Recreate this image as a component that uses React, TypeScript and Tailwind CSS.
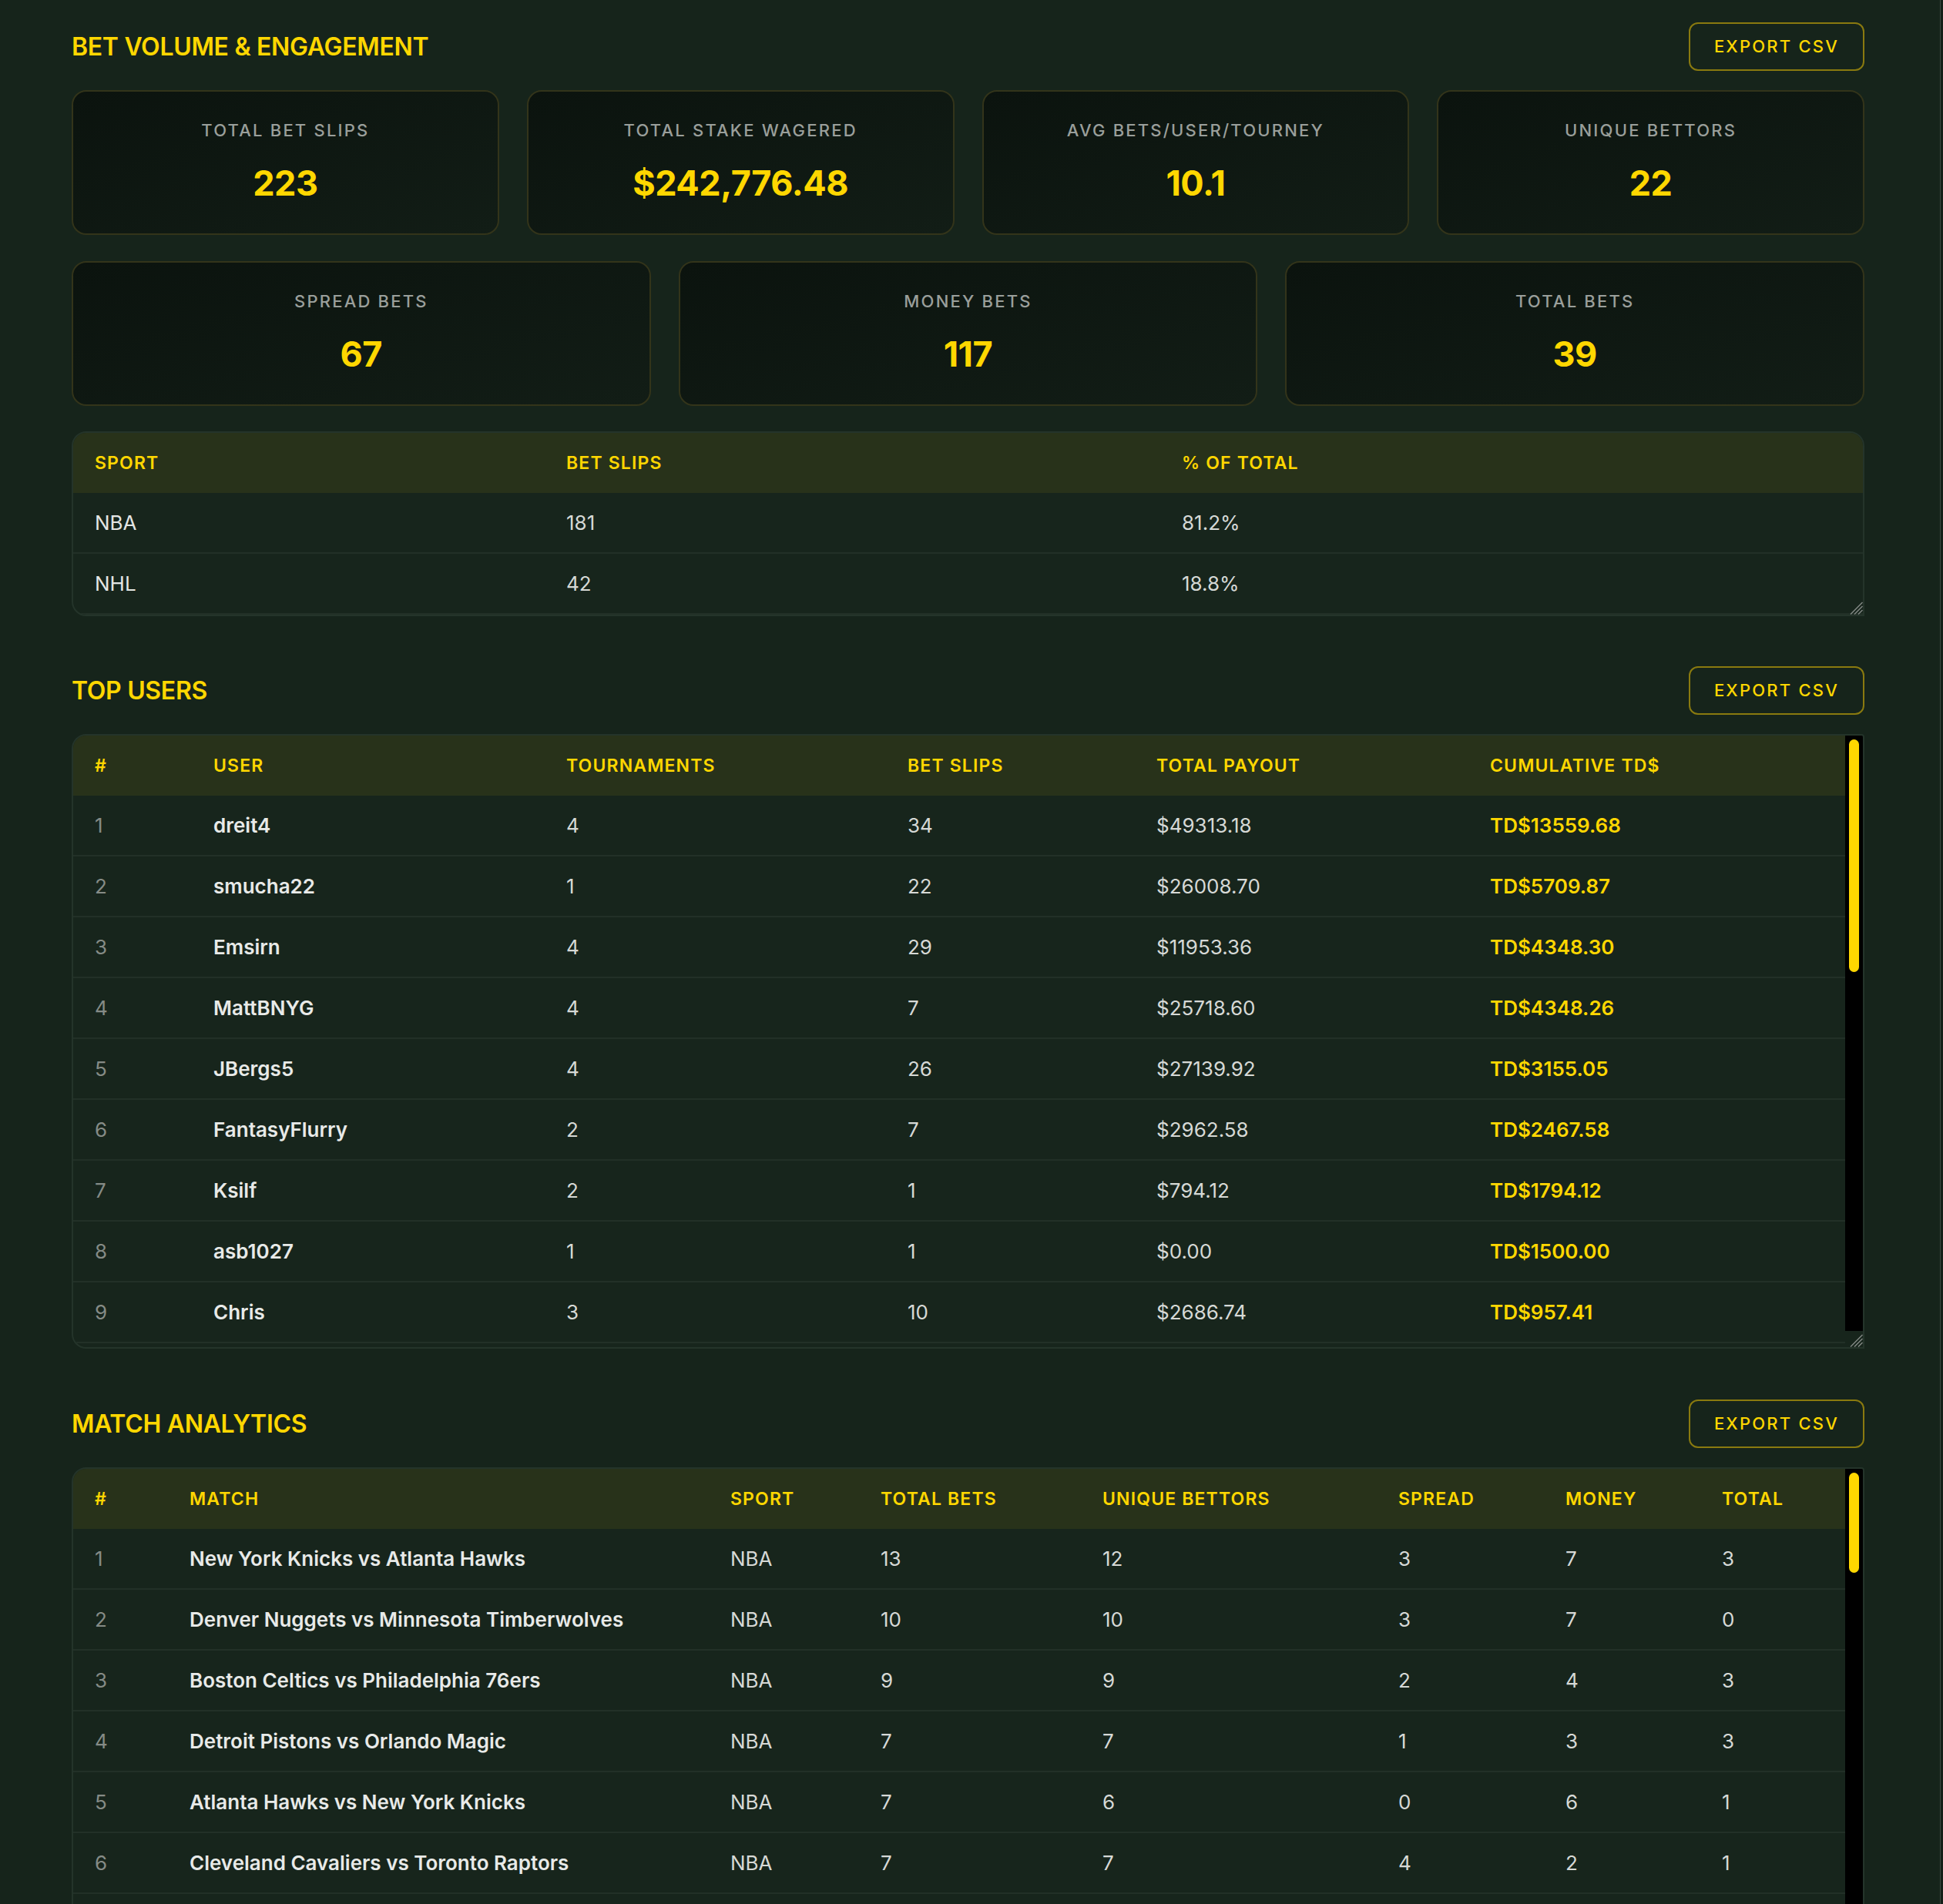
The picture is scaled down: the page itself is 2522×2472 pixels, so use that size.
import React from "react";

type UserRow = [string, number, number, string, string];
type MatchRow = [string, string, number, number, number, number, number];

const topCards = [
    { label: "TOTAL BET SLIPS", value: "223" },
    { label: "TOTAL STAKE WAGERED", value: "$242,776.48" },
    { label: "AVG BETS/USER/TOURNEY", value: "10.1" },
    { label: "UNIQUE BETTORS", value: "22" },
];

const typeCards = [
    { label: "SPREAD BETS", value: "67" },
    { label: "MONEY BETS", value: "117" },
    { label: "TOTAL BETS", value: "39" },
];

const sports = [
    ["NBA", "181", "81.2%"],
    ["NHL", "42", "18.8%"],
];

// rows that fit in the visible part of the scroll box
const users: UserRow[] = [
    ["dreit4", 4, 34, "$49313.18", "TD$13559.68"],
    ["smucha22", 1, 22, "$26008.70", "TD$5709.87"],
    ["Emsirn", 4, 29, "$11953.36", "TD$4348.30"],
    ["MattBNYG", 4, 7, "$25718.60", "TD$4348.26"],
    ["JBergs5", 4, 26, "$27139.92", "TD$3155.05"],
    ["FantasyFlurry", 2, 7, "$2962.58", "TD$2467.58"],
    ["Ksilf", 2, 1, "$794.12", "TD$1794.12"],
    ["asb1027", 1, 1, "$0.00", "TD$1500.00"],
    ["Chris", 3, 10, "$2686.74", "TD$957.41"],
];

const matches: MatchRow[] = [
    ["New York Knicks vs Atlanta Hawks", "NBA", 13, 12, 3, 7, 3],
    ["Denver Nuggets vs Minnesota Timberwolves", "NBA", 10, 10, 3, 7, 0],
    ["Boston Celtics vs Philadelphia 76ers", "NBA", 9, 9, 2, 4, 3],
    ["Detroit Pistons vs Orlando Magic", "NBA", 7, 7, 1, 3, 3],
    ["Atlanta Hawks vs New York Knicks", "NBA", 7, 6, 0, 6, 1],
    ["Cleveland Cavaliers vs Toronto Raptors", "NBA", 7, 7, 4, 2, 1],
];

const thCls =
    "bg-[#28321a] px-[28px] py-[21px] text-left text-[23px] font-semibold leading-[36px] tracking-[0.05em] text-[#ffd700]";
const tdCls = "px-[28px] py-[20px] text-[26px] leading-[37px]";

function Grip() {
    return (
        <svg width="20" height="20" viewBox="0 0 20 20" className="absolute bottom-0 right-0">
            <path d="M4 19.5 L19.5 4 M9 19.5 L19.5 9 M14 19.5 L19.5 14" stroke="#858a86" strokeWidth="1.4" />
        </svg>
    );
}

// black track + yellow thumb like the app's custom scrollbar
function ScrollTrack({ thumb }: { thumb: number }) {
    return (
        <div className="flex w-[23px] shrink-0 flex-col">
            <div className="flex-1 bg-black px-[5px] pt-[5px]">
                <div className="rounded-full bg-[#ffd700]" style={{ height: thumb }} />
            </div>
            <div className="relative h-[21px]">
                <Grip />
            </div>
        </div>
    );
}

function SectionHeader({ title }: { title: string }) {
    return (
        <div className="mb-[25px] flex items-center justify-between">
            <h2 className="text-[32px] font-semibold leading-[40px] tracking-[-0.01em] text-[#ffd700]">{title}</h2>
            <button className="rounded-[12px] border-2 border-[#8a7a0f] px-[31px] py-[13px] text-[22px] font-medium leading-[33px] tracking-[0.1em] text-[#ffd700]">
                EXPORT CSV
            </button>
        </div>
    );
}

function StatCard({ label, value }: { label: string; value: string }) {
    return (
        <div className="rounded-[19px] border-2 border-[#33341a] bg-linear-to-br from-[#0b130e] to-[#121d16] pt-[34px] pb-[32px] text-center">
            <div className="text-[22px] font-medium leading-[33px] tracking-[0.1em] text-[#9a9f9b]">{label}</div>
            <div className="mt-[18px] text-[45px] font-bold leading-[67px] tracking-[-0.01em] text-[#ffd700]">{value}</div>
        </div>
    );
}

export default function App() {
    return (
        <div className="flex h-screen overflow-hidden bg-[#16241b] text-[#e4e6e4] [font-family:Inter,sans-serif]">
            <main className="min-w-0 flex-1 pl-[93px] pr-[98px] pt-[29px]">
                {/* bet volume */}
                <section>
                    <SectionHeader title="BET VOLUME & ENGAGEMENT" />
                    <div className="grid grid-cols-4 gap-[36px]">
                        {topCards.map((c) => (
                            <StatCard key={c.label} {...c} />
                        ))}
                    </div>
                    <div className="mt-[34px] grid grid-cols-3 gap-[36px]">
                        {typeCards.map((c) => (
                            <StatCard key={c.label} {...c} />
                        ))}
                    </div>

                    <div className="relative mt-[33px] overflow-hidden rounded-[19px] rounded-br-none border-2 border-[#24342a] bg-[#17251c]">
                        <table className="w-full table-fixed border-collapse">
                            <thead>
                                <tr>
                                    <th className={`${thCls} w-[612px]`}>SPORT</th>
                                    <th className={`${thCls} w-[799px]`}>BET SLIPS</th>
                                    <th className={thCls}>% OF TOTAL</th>
                                </tr>
                            </thead>
                            <tbody>
                                {sports.map((s) => (
                                    <tr key={s[0]} className="border-b-2 border-[#223027]">
                                        <td className={`${tdCls} text-[#e4e6e4]`}>{s[0]}</td>
                                        <td className={`${tdCls} text-[#d6d9d6]`}>{s[1]}</td>
                                        <td className={`${tdCls} text-[#d6d9d6]`}>{s[2]}</td>
                                    </tr>
                                ))}
                            </tbody>
                        </table>
                        <Grip />
                    </div>
                </section>

                {/* top users */}
                <section className="mt-[65px]">
                    <SectionHeader title="TOP USERS" />
                    <div className="flex h-[798px] overflow-hidden rounded-[19px] rounded-tr-[4px] rounded-br-none border-2 border-[#24342a] bg-[#17251c]">
                        <div className="min-w-0 flex-1 overflow-hidden">
                            <table className="w-full table-fixed border-collapse">
                                <thead>
                                    <tr>
                                        <th className={`${thCls} w-[154px]`}>#</th>
                                        <th className={`${thCls} w-[458px]`}>USER</th>
                                        <th className={`${thCls} w-[443px]`}>TOURNAMENTS</th>
                                        <th className={`${thCls} w-[323px]`}>BET SLIPS</th>
                                        <th className={`${thCls} w-[433px]`}>TOTAL PAYOUT</th>
                                        <th className={thCls}>CUMULATIVE TD$</th>
                                    </tr>
                                </thead>
                                <tbody>
                                    {users.map((u, i) => (
                                        <tr key={u[0]} className="border-b-2 border-[#223027]">
                                            <td className={`${tdCls} text-[#858b86]`}>{i + 1}</td>
                                            <td className={`${tdCls} font-semibold text-[#e8eae8]`}>{u[0]}</td>
                                            <td className={`${tdCls} text-[#d6d9d6]`}>{u[1]}</td>
                                            <td className={`${tdCls} text-[#d6d9d6]`}>{u[2]}</td>
                                            <td className={`${tdCls} text-[#d6d9d6]`}>{u[3]}</td>
                                            <td className={`${tdCls} font-semibold text-[#ffd700]`}>{u[4]}</td>
                                        </tr>
                                    ))}
                                </tbody>
                            </table>
                        </div>
                        <ScrollTrack thumb={302} />
                    </div>
                </section>

                {/* match analytics */}
                <section className="mt-[66px]">
                    <SectionHeader title="MATCH ANALYTICS" />
                    <div className="flex h-[798px] overflow-hidden rounded-[19px] rounded-tr-[4px] rounded-br-none border-2 border-[#24342a] bg-[#17251c]">
                        <div className="min-w-0 flex-1 overflow-hidden">
                            <table className="w-full table-fixed border-collapse">
                                <thead>
                                    <tr>
                                        <th className={`${thCls} w-[123px]`}>#</th>
                                        <th className={`${thCls} w-[702px]`}>MATCH</th>
                                        <th className={`${thCls} w-[195px]`}>SPORT</th>
                                        <th className={`${thCls} w-[288px]`}>TOTAL BETS</th>
                                        <th className={`${thCls} w-[384px]`}>UNIQUE BETTORS</th>
                                        <th className={`${thCls} w-[217px]`}>SPREAD</th>
                                        <th className={`${thCls} w-[203px]`}>MONEY</th>
                                        <th className={thCls}>TOTAL</th>
                                    </tr>
                                </thead>
                                <tbody>
                                    {matches.map((m, i) => (
                                        <tr key={i} className="border-b-2 border-[#223027]">
                                            <td className={`${tdCls} text-[#858b86]`}>{i + 1}</td>
                                            <td className={`${tdCls} font-semibold text-[#e8eae8]`}>{m[0]}</td>
                                            <td className={`${tdCls} text-[24px] text-[#d6d9d6]`}>{m[1]}</td>
                                            <td className={`${tdCls} text-[#d6d9d6]`}>{m[2]}</td>
                                            <td className={`${tdCls} text-[#d6d9d6]`}>{m[3]}</td>
                                            <td className={`${tdCls} text-[#d6d9d6]`}>{m[4]}</td>
                                            <td className={`${tdCls} text-[#d6d9d6]`}>{m[5]}</td>
                                            <td className={`${tdCls} text-[#d6d9d6]`}>{m[6]}</td>
                                        </tr>
                                    ))}
                                </tbody>
                            </table>
                        </div>
                        <ScrollTrack thumb={130} />
                    </div>
                </section>
            </main>
            {/* page scrollbar edge */}
            <div className="w-[4px] shrink-0 border-l border-[#3a4840] bg-[#131f17]" />
        </div>
    );
}
